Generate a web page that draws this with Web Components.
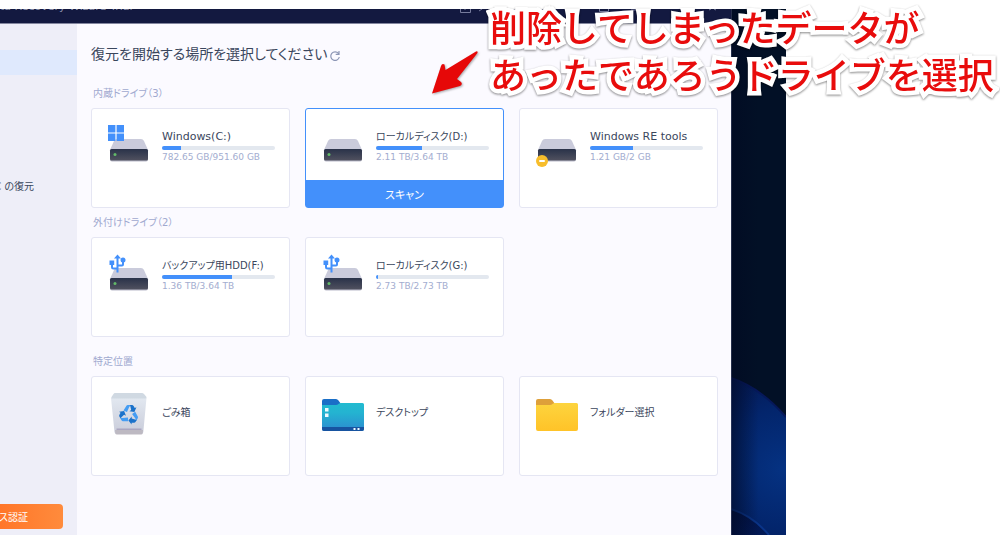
<!DOCTYPE html>
<html lang="ja">
<head>
<meta charset="utf-8">
<title>Data Recovery Wizard Trial</title>
<style>
body { margin: 0; background: #fff; font-family: "DejaVu Sans", "Noto Sans CJK JP", sans-serif; font-feature-settings: "palt"; color: #3a465c; }
</style>
</head>
<body>
<recovery-page></recovery-page>
<script>
const define = (name, html, setup) => {
  const template = document.createElement('template');
  template.innerHTML = html;
  customElements.define(name, class extends HTMLElement {
    constructor() {
      super();
      this.attachShadow({ mode: 'open' }).append(template.content.cloneNode(true));
    }
    connectedCallback() {
      if (setup) setup(this, this.shadowRoot);
    }
  });
};

const disk = `
  <path d="M10 18H34Q36 18 37 20L41 29H3L7 20Q8 18 10 18Z" fill="#cacbdb"/>
  <path d="M3 37H41V38Q41 40.500 39 40.500H5Q3 40.500 3 38Z" fill="#b9bac9"/>
  <rect x="3" y="28" width="38" height="11.500" rx="1.5" fill="url(#face)"/>`;
const led = `<circle cx="8" cy="33.5" r="1.5" fill="#62b968"/>`;
const defs = `<defs>
  <linearGradient id="face" x1="0" y1="0" x2="0" y2="1"><stop offset="0" stop-color="#293249"/><stop offset="1" stop-color="#50515f"/></linearGradient>
  <linearGradient id="bin" x1="0" y1="0" x2="0" y2="1"><stop offset="0" stop-color="#e2e8f0"/><stop offset="1" stop-color="#c9ccda"/></linearGradient>
  <linearGradient id="desk" x1="0" y1="0" x2="0" y2="1"><stop offset="0" stop-color="#22bbd0"/><stop offset=".35" stop-color="#24b3d1"/><stop offset="1" stop-color="#2c8bd0"/></linearGradient>
  <linearGradient id="gold" x1="0" y1="0" x2="0" y2="1"><stop offset="0" stop-color="#fdd43e"/><stop offset="1" stop-color="#ffc328"/></linearGradient>
</defs>`;
const recycleArm = `
  <path d="M-5.5 -4 L-2.7 -8.6 Q-2.2 -9.4 -1.2 -9.4 H2 L.2 -7.5 -2 -2.4Z" fill="#459df3"/>
  <path d="M1 -9.4 H3 Q4 -9.4 4.6 -8.4 L5.8 -6.4 7.4 -7.2 5.4 -2.5 .4 -3.3 2.2 -4.4Z" fill="#1b72ca"/>`;
const icons = {
  disk: disk + led,
  windows: disk + led + `<path d="M1 4h7.400v7.400H1zM9.600 4H17v7.400H9.600zM1 12.600h7.400V20H1zM9.600 12.600H17V20H9.600z" fill="#4390fb"/>`,
  locked: disk + `<circle cx="7" cy="40" r="6" fill="#f7bd2b"/><rect x="4" y="39" width="6" height="2" rx="1" fill="#fff"/>`,
  usb: disk + led + `<g transform="translate(0 4.500)"><g fill="none" stroke="#4390fb" stroke-width="2"><path d="M10.500 3V18M5 8V12.500Q5 14 6.500 14H10.500M16 6V10Q16 11 15 11H10.500"/></g><path d="M10.500 0L14 4H7Z M2.500 6H7.200V10.500H2.500Z" fill="#4390fb"/><circle cx="16" cy="5.500" r="2.500" fill="#4390fb"/></g>`,
  bin: `<path d="M4 9L7.500 43Q7.800 45 9.500 45H34.500Q36 45 36.300 43L39.500 9Z" fill="url(#bin)"/>
    <path d="M8 4H35Q36 4 37 5L39.500 8Q40 9.500 38 9.500H6Q3.700 9.500 4.500 8L6.500 5Q7 4 8 4Z" fill="#d0d9e2"/>
    <path d="M8 41H36L35.700 44Q35.500 45.500 34 45.500H10Q8.500 45.500 8.300 44Z" fill="#bdb9c2"/>
    <rect x="9.500" y="39.500" width="25" height="1.500" fill="#aaa6c0"/>
    <g transform="translate(22 25.500)"><g>${recycleArm}</g><g transform="rotate(120)">${recycleArm}</g><g transform="rotate(240)">${recycleArm}</g></g>`,
  desktop: `<path d="M1 12Q1 10 3 10H15Q16.500 10 17.500 11.500L20 15 15 18H1Z" fill="#1a6fc7"/>
    <path d="M1 16H15Q16.500 16 17.500 15L18 14.500Q19 14 20 14H41.500Q43 14 43 15.500V40Q43 42 41 42H3Q1 42 1 40Z" fill="url(#desk)"/>
    <path d="M1 38H43V40Q43 42 41 42H3Q1 42 1 40Z" fill="#1753a0"/>
    <path d="M4 19h3.500v3.500H4zM4 24.500h3.500V28H4zM32.500 39h2v2h-2zM36.500 39h2v2h-2z" fill="#eefaff"/>`,
  folder: `<path d="M1 12Q1 10 3 10H15Q16.500 10 17.500 11.500L20 15 15 18H1Z" fill="#dea03a"/>
    <path d="M1 16H15Q16.500 16 17.500 15L18 14.500Q19 14 20 14H41.500Q43 14 43 15.500V40Q43 42 41 42H3Q1 42 1 40Z" fill="url(#gold)"/>`
};

/* A drive or a place that can be scanned. */
define('location-card', `
<style>
:host { display: block; }
.card { box-sizing: border-box; position: relative; display: flex; gap: 11px; min-height: 100px; padding: 12px 14px 0 15px; background: #fff; border: 1px solid #e5e6f3; border-radius: 3px; }
svg { flex: none; width: 44px; height: 48px; }
.info { flex: 1; min-width: 0; display: flex; flex-direction: column; padding-top: 8px; }
.name { margin: 0; font-size: 10px; line-height: 16px; font-weight: 400; white-space: nowrap; }
:host([latin]) .name { font-size: 11px; }
progress { appearance: none; display: block; width: 100%; height: 4px; margin: 1px 0; border: 0; border-radius: 2px; overflow: hidden; background: #e3e8ef; }
progress::-webkit-progress-bar { background: #e3e8ef; }
progress::-webkit-progress-value { background: #4390fb; }
.size { font-size: 9px; line-height: 12px; color: #a3add0; white-space: nowrap; }
.place .info { padding-top: 16px; }
.selected { border-color: #4390fb; }
button { position: absolute; left: 0; right: 0; bottom: 0; height: 27px; padding: 0; border: 0; background: #4390fb; color: #fff; font: inherit; font-size: 11px; font-feature-settings: inherit; }
[hidden] { display: none; }
</style>
<article class="card">
  <svg viewBox="0 0 44 48" aria-hidden="true"></svg>
  <div class="info">
    <h3 class="name"><slot></slot></h3>
    <progress max="100" aria-label="使用量"></progress>
    <div class="size"></div>
  </div>
  <button type="button" hidden>スキャン</button>
</article>`, (host, root) => {
  const card = root.querySelector('.card');
  root.querySelector('svg').innerHTML = defs + icons[host.getAttribute('icon')];
  const bar = root.querySelector('progress');
  const size = root.querySelector('.size');
  if (host.hasAttribute('size')) {
    bar.value = Number(host.getAttribute('used'));
    size.textContent = host.getAttribute('size');
  } else {
    bar.hidden = size.hidden = true;
    card.classList.add('place');
  }
  if (host.hasAttribute('selected')) {
    card.classList.add('selected');
    root.querySelector('button').hidden = false;
  }
});

define('location-group', `
<style>
:host { display: block; }
h2 { margin: 0; padding: 6px 2px 5px; font-size: 10px; line-height: 18px; font-weight: 400; color: #a0a9cf; }
.grid { display: grid; grid-template-columns: repeat(3, minmax(0, 1fr)); gap: 15px; }
</style>
<section><h2></h2><div class="grid"><slot></slot></div></section>`, (host, root) => {
  root.querySelector('h2').textContent = host.getAttribute('label');
});

define('title-bar', `
<style>
:host { display: flex; justify-content: space-between; height: 14px; overflow: hidden; background: #131940; border-bottom: 1px solid #83869f; }
span { margin-top: -10px; font-size: 11px; line-height: 16px; color: #8f94af; white-space: nowrap; }
svg { flex: none; width: 272px; height: 14px; }
</style>
<span>ta Recovery Wizard Trial</span>
<svg viewBox="0 0 272 14" fill="none" stroke="#777c9d" aria-hidden="true"><path d="M1.500 0V3.500H11.500V0M6 0V1M20 2L23 0M140.500 0V2.500H149.500V0M172 1H180M223.500 0V1.500H231.500V0M250 1L252 0M255 0L257 1"/></svg>`);

define('side-bar', `
<style>
:host { box-sizing: border-box; display: flex; flex-direction: column; justify-content: space-between; width: 77px; padding: 26px 0 6px; background: #eeeef8; overflow: hidden; }
nav { display: flex; flex-direction: column; gap: 98px; }
a { display: flex; justify-content: flex-end; align-items: center; height: 25px; padding-right: 43px; color: inherit; font-size: 10px; text-decoration: none; white-space: nowrap; }
a[aria-current] { background: #dfe9fd; }
button { display: flex; justify-content: flex-end; align-items: center; width: 63px; height: 25px; padding: 0 35px 0 0; border: 0; border-radius: 0 4px 4px 0; background: linear-gradient(90deg, #ff7629, #ff8b3c); color: #fff; font: inherit; font-size: 10px; font-feature-settings: inherit; white-space: nowrap; }
</style>
<nav><a href="#drives" aria-current="page" aria-label="ドライブ"></a><a href="#pc">C の復元</a></nav>
<button type="button">ンス認証</button>`);

define('wall-paper', `
<style>
:host { display: block; position: relative; width: 55px; background: #021026; }
svg { position: absolute; inset: 0; width: 100%; height: 100%; }
</style>
<svg viewBox="0 0 55 526" preserveAspectRatio="xMidYMax slice" aria-hidden="true">
  <defs>
    <radialGradient id="bloom" gradientUnits="userSpaceOnUse" cx="52" cy="460" r="120"><stop offset="0" stop-color="#053282"/><stop offset=".5" stop-color="#03256c"/><stop offset="1" stop-color="#041348"/></radialGradient>
    <linearGradient id="edge"><stop offset="0" stop-color="#010922" stop-opacity=".6"/><stop offset=".5" stop-color="#010922" stop-opacity="0"/></linearGradient>
    <linearGradient id="petal" x1="0" y1="0" x2="1" y2="1"><stop offset="0" stop-color="#031140"/><stop offset="1" stop-color="#021a58"/></linearGradient>
  </defs>
  <path d="M0 369Q30 379 55 408V526H0Z" fill="url(#bloom)"/>
  <path d="M0 369Q30 379 55 408" fill="none" stroke="#06185a" stroke-width="2"/>
  <path d="M0 500Q22 507 38 526H0Z" fill="url(#petal)"/>
  <path d="M0 500Q22 507 38 526" fill="none" stroke="#0a3488" stroke-width="2"/>
  <path d="M0 0H55V526H0Z" fill="url(#edge)"/>
  <path d="M0 0V526" stroke="#4a5274"/>
</svg>`);

define('call-out', `
<style>
:host { position: absolute; left: 430px; top: 3px; display: flex; pointer-events: none; }
svg { width: 60px; height: 94px; filter: drop-shadow(1px 1px 1px #0005); }
p { margin: 0; color: #e80c0c; font-size: 36px; line-height: 47px; font-weight: 500; font-family: "Noto Sans CJK JP", sans-serif; font-feature-settings: normal; white-space: nowrap; -webkit-text-stroke: 9px #fff; paint-order: stroke fill; stroke-linejoin: round; filter: drop-shadow(0 1px 1px #0007); }
</style>
<svg viewBox="0 0 60 94" aria-hidden="true"><path d="M2 90.500L11 63Q12 60 14.500 61.500L15.500 67 46 48.500Q48 47.500 47.500 50L27 76 31 79Q33 81.500 30 83Z" fill="#e60808"/></svg>
<p><slot></slot></p>`);

define('recovery-page', `
<style>
:host { box-sizing: border-box; display: grid; grid-template-columns: minmax(0, 731fr) 55px minmax(0, 214fr); min-height: 100vh; padding-top: 9px; position: relative; overflow: hidden; }
.app { display: flex; flex-direction: column; }
.body { flex: 1; display: flex; }
main { flex: 1; min-width: 0; padding: 18px 13px 0 14px; background: #fbfaff; }
header { display: flex; align-items: center; gap: 2px; height: 24px; margin-bottom: 13px; }
h1 { margin: 0; font-size: 14px; line-height: 24px; font-weight: 400; white-space: nowrap; }
header button { display: flex; padding: 4px 0 0; border: 0; background: none; }
.places { margin-top: 10px; }
</style>
<div class="app">
  <title-bar></title-bar>
  <div class="body">
    <side-bar></side-bar>
    <main>
      <header>
        <h1>復元を開始する場所を選択してください</h1>
        <button type="button" aria-label="更新"><svg width="12" height="12" viewBox="0 0 12 12" fill="none" stroke="#8c96b5" stroke-width="1.200"><path d="M9.500 3.500A4.300 4.300 0 1 0 10.300 7M10 1V4.300H6.700"/></svg></button>
      </header>
      <location-group label="内蔵ドライブ（3）">
        <location-card latin icon="windows" used="17" size="782.65 GB/951.60 GB">Windows(C:)</location-card>
        <location-card icon="disk" used="41" size="2.11 TB/3.64 TB" selected>ローカルディスク(D:)</location-card>
        <location-card latin icon="locked" used="38" size="1.21 GB/2 GB">Windows RE tools</location-card>
      </location-group>
      <location-group label="外付けドライブ（2）">
        <location-card icon="usb" used="62" size="1.36 TB/3.64 TB">バックアップ用HDD(F:)</location-card>
        <location-card icon="usb" used="2" size="2.73 TB/2.73 TB">ローカルディスク(G:)</location-card>
      </location-group>
      <location-group class="places" label="特定位置">
        <location-card icon="bin">ごみ箱</location-card>
        <location-card icon="desktop">デスクトップ</location-card>
        <location-card icon="folder">フォルダー選択</location-card>
      </location-group>
    </main>
  </div>
</div>
<wall-paper></wall-paper>
<call-out>削除してしまったデータが<br>あったであろうドライブを選択</call-out>`);
</script>
</body>
</html>
